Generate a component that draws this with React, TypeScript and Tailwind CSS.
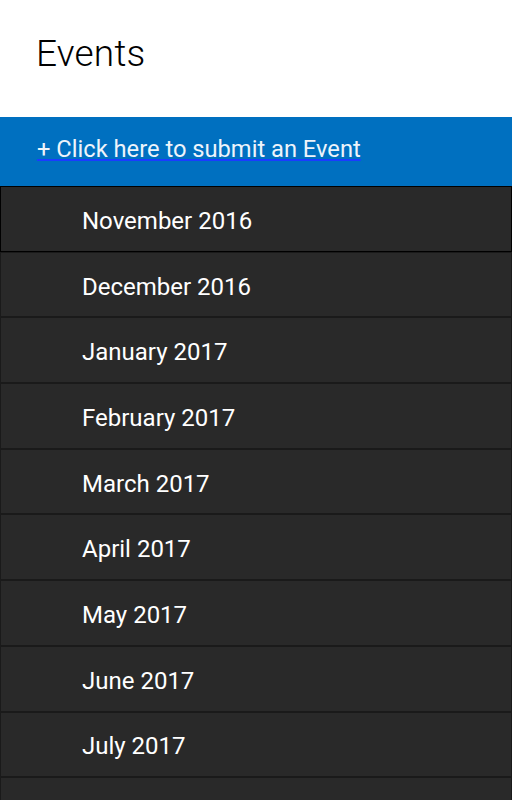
import React from "react";

const months = [
  "November 2016",
  "December 2016",
  "January 2017",
  "February 2017",
  "March 2017",
  "April 2017",
  "May 2017",
  "June 2017",
  "July 2017",
];

export default function App() {
  return (
    <div className="w-[512px] h-[800px] overflow-hidden bg-white" style={{ fontFamily: "Roboto, 'Noto Sans', sans-serif" }}>
      <div className="h-[117px] pl-[36px] pt-[30px]">
        <h1 className="text-[37px] font-light text-black leading-[48px] tracking-[0.2px]">Events</h1>
      </div>
      <div className="h-[69px] bg-[#0070c0] pl-[37px] flex items-center pb-[3px]">
        <a href="#" className="text-[23.7px] text-[#eef4fb] underline decoration-[#1a3cff] decoration-[2px] underline-offset-[2px] leading-none">
          + Click here to submit an Event
        </a>
      </div>
      <div className="flex flex-col">
        {months.map((m, i) => (
          <div
            key={m}
            className={
              i === 0
                ? "h-[65.7px] shrink-0 bg-[#292929] border border-black flex items-center pl-[81px] pt-[4px] text-[24px] text-white"
                : "h-[65.7px] shrink-0 bg-[#292929] border border-[#1a1a1a] flex items-center pl-[81px] pt-[4px] text-[24px] text-white"
            }
          >
            {m}
          </div>
        ))}
        <div className="h-[65.7px] shrink-0 bg-[#292929] border border-[#1a1a1a]" />
      </div>
    </div>
  );
}
